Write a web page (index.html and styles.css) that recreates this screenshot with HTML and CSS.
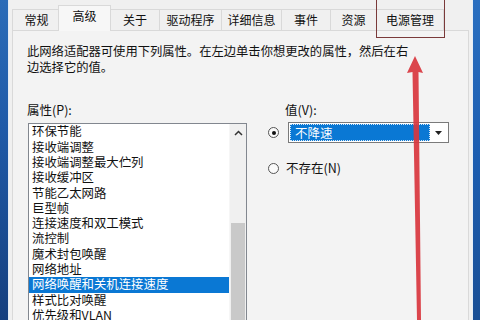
FILE: index.html
```html
<!DOCTYPE html>
<html lang="zh-CN">
<head>
<meta charset="utf-8">
<title>网络适配器属性</title>
<link rel="stylesheet" href="styles.css">
</head>
<body>
<div class="screen">
  <div class="desk desk-left"></div>
  <div class="dialog">
    <div class="tabs">
      <div class="tab tab-w48">常规</div>
      <div class="tab tab-sel">高级</div>
      <div class="tab tab-w49">关于</div>
      <div class="tab tab-w62">驱动程序</div>
      <div class="tab tab-w60">详细信息</div>
      <div class="tab tab-w49">事件</div>
      <div class="tab tab-w46">资源</div>
      <div class="tab tab-w67">电源管理</div>
    </div>
    <div class="panel">
      <p class="desc">此网络适配器可使用下列属性。在左边单击你想更改的属性，然后在右<br>边选择它的值。</p>
      <div class="props">
        <div class="left-col">
          <div class="label">属性(P):</div>
          <div class="listbox">
            <ul class="items">
              <li>环保节能</li>
              <li>接收端调整</li>
              <li>接收端调整最大伫列</li>
              <li>接收缓冲区</li>
              <li>节能乙太网路</li>
              <li>巨型帧</li>
              <li>连接速度和双工模式</li>
              <li>流控制</li>
              <li>魔术封包唤醒</li>
              <li>网络地址</li>
              <li class="selected">网络唤醒和关机连接速度</li>
              <li>样式比对唤醒</li>
              <li>优先级和VLAN</li>
            </ul>
            <div class="scrollbar">
              <div class="sb-up">
                <svg width="9" height="6" viewBox="0 0 9 6"><path d="M1 5 L4.5 1.5 L8 5" fill="none" stroke="#333" stroke-width="1.5"/></svg>
              </div>
              <div class="sb-track"></div>
              <div class="sb-thumb"></div>
            </div>
          </div>
        </div>
        <div class="right-col">
          <div class="label value-label">值(V):</div>
          <div class="opt-row">
            <span class="radio radio-on"></span>
            <div class="combo">
              <div class="combo-text"><span class="focus">不降速</span></div>
              <div class="combo-btn">
                <svg width="7" height="4" viewBox="0 0 7 4"><path d="M0 0 H7 L3.5 4 Z" fill="#222"/></svg>
              </div>
            </div>
          </div>
          <div class="opt-row opt-row2">
            <span class="radio"></span>
            <span class="opt-text">不存在(N)</span>
          </div>
        </div>
      </div>
    </div>
  </div>
  <div class="desk desk-right"></div>
  <div class="redbox"></div>
  <svg class="arrow" width="480" height="320" viewBox="0 0 480 320">
    <polygon points="415,56 423,73 418.5,72 421,320 417,320 412.5,72 407,73" fill="#d9363e" fill-opacity="0.92"/>
  </svg>
</div>
</body>
</html>
```
FILE: styles.css
```css
* { box-sizing: border-box; }
html, body { margin: 0; padding: 0; }
body {
  width: 480px;
  height: 320px;
  overflow: hidden;
  font-family: "Noto Sans CJK SC", "Microsoft YaHei", sans-serif;
  color: #111;
  background: #f0f0f0;
}
.screen {
  position: relative;
  width: 480px;
  height: 320px;
  display: flex;
  overflow: hidden;
}
.desk { flex: none; }
.desk-left {
  width: 8px;
  background: linear-gradient(180deg, #2b6cb8 0%, #1f5aa8 40%, #153f7e 100%);
}
.desk-right {
  width: 7px;
  background: linear-gradient(180deg, #2a6fc0 0%, #1c5db0 50%, #1a4f95 100%);
}
.dialog {
  flex: 1;
  background: #f0f0f0;
  border-left: 1px solid #e4ecf5;
  border-right: 1px solid #e6eef7;
  padding: 0 3px 0 3px;
  display: flex;
  flex-direction: column;
}
.tabs {
  height: 30px;
  display: flex;
  align-items: flex-end;
  position: relative;
  z-index: 2;
  font-size: 12px;
}
.tab {
  height: 21px;
  border: 1px solid #d9d9d9;
  border-bottom: none;
  margin-right: -1px;
  background: #f0f0f0;
  display: flex;
  align-items: center;
  justify-content: center;
  line-height: 1;
  color: #111;
  padding-bottom: 1px;
}
.tab-w46 { width: 47px; }
.tab-w48 { width: 49px; }
.tab-w49 { width: 50px; }
.tab-w60 { width: 61px; }
.tab-w62 { width: 63px; }
.tab-w67 { width: 68px; }
.tab-sel {
  width: 53px;
  height: 26px;
  margin: 0 -2px -1px -2px;
  background: #f7f7f7;
  border-color: #d9d9d9;
  padding-bottom: 5px;
  position: relative;
  z-index: 3;
}
.tab-sel + .tab { margin-left: 1px; }
.panel {
  flex: 1;
  border: 1px solid #d9d9d9;
  border-bottom: none;
  background: #f3f3f3;
  padding: 12px 0 0 14px;
  overflow: hidden;
}
.desc {
  margin: 0;
  font-size: 12.3px;
  line-height: 16px;
  color: #111;
  white-space: nowrap;
}
.props {
  display: flex;
  margin-top: 27px;
}
.label {
  font-size: 12.5px;
  line-height: 16px;
  height: 16px;
}
.left-col {
  width: 220px;
  flex: none;
}
.listbox {
  margin: 5px 0 0 1px;
  width: 219px;
  height: 200px;
  border: 1px solid #82878f;
  border-bottom: none;
  background: #fff;
  display: flex;
}
.items {
  list-style: none;
  margin: 0;
  padding: 0.4px 0 0 0;
  flex: 1;
  font-size: 12.4px;
  line-height: 15.3px;
}
.items li {
  height: 15.3px;
  padding-left: 3px;
  white-space: nowrap;
  color: #111;
}
.items li.selected {
  background: #0a78d4;
  color: #fff;
}
.scrollbar {
  width: 17px;
  flex: none;
  background: #f0f0f0;
  border-left: 1px solid #f6f6f6;
  display: flex;
  flex-direction: column;
  align-items: center;
}
.sb-up {
  height: 17px;
  width: 100%;
  display: flex;
  align-items: center;
  justify-content: center;
}
.sb-track { height: 82px; }
.sb-thumb {
  width: 14px;
  flex: 1;
  background: #c9c9c9;
}
.right-col {
  margin-left: 20px;
  flex: 1;
}
.value-label { margin-left: 18px; }
.opt-row {
  display: flex;
  align-items: center;
  margin-top: 4px;
  height: 21px;
}
.opt-row2 {
  margin-top: 17px;
  height: 16px;
}
.radio {
  width: 11px;
  height: 11px;
  border: 1px solid #555;
  border-radius: 50%;
  background: #fafafa;
  flex: none;
  position: relative;
  margin-left: 1px;
}
.radio-on::after {
  content: "";
  position: absolute;
  left: 2.5px;
  top: 2.5px;
  width: 4px;
  height: 4px;
  border-radius: 50%;
  background: #111;
}
.combo {
  margin-left: 9px;
  width: 161px;
  height: 21px;
  border: 1px solid #7a7a7a;
  background: #fff;
  display: flex;
  padding: 1px;
}
.combo-text {
  flex: 1;
  background: #0a78d4;
  padding: 0;
  display: flex;
}
.focus {
  flex: 1;
  border: 1px dotted #d6e8f8;
  color: #fff;
  font-size: 12.5px;
  line-height: 15px;
  padding-left: 4px;
}
.combo-btn {
  width: 17px;
  flex: none;
  display: flex;
  align-items: center;
  justify-content: center;
  background: #fff;
}
.opt-text {
  margin-left: 7px;
  font-size: 12.5px;
  line-height: 16px;
}
.redbox {
  position: absolute;
  left: 376px;
  top: -3px;
  width: 69px;
  height: 41px;
  border: 1.5px solid #7a3a3a;
  z-index: 5;
}
.arrow {
  position: absolute;
  left: 0;
  top: 0;
  z-index: 6;
  pointer-events: none;
}
```
